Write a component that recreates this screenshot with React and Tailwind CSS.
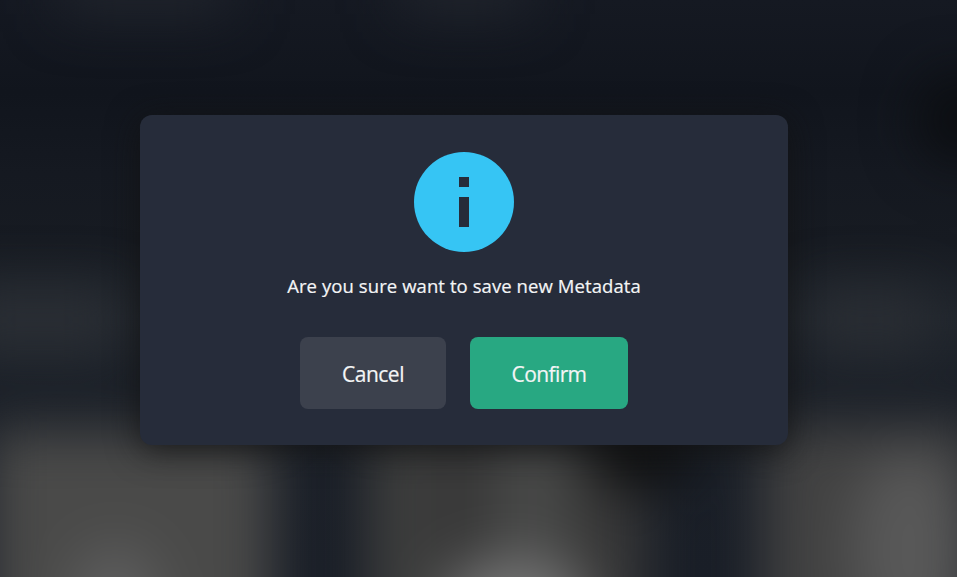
// Soft, out-of-focus page content that shows behind the dialog.
function Backdrop() {
  return (
    <svg
      className="absolute inset-0 h-full w-full"
      viewBox="0 0 957 577"
      preserveAspectRatio="none"
      aria-hidden="true"
    >
      <defs>
        <filter id="soft" x="-200" y="-200" width="1357" height="977" filterUnits="userSpaceOnUse" colorInterpolationFilters="sRGB">
          <feGaussianBlur stdDeviation="27" />
        </filter>
        <linearGradient id="page" x1="0" y1="0" x2="0" y2="1">
          <stop offset="0" stopColor="#151922" />
          <stop offset="0.16" stopColor="#11151d" />
          <stop offset="0.3" stopColor="#151921" />
          <stop offset="0.42" stopColor="#171b22" />
          <stop offset="0.55" stopColor="#20252c" />
          <stop offset="0.67" stopColor="#1b2028" />
          <stop offset="1" stopColor="#191e27" />
        </linearGradient>
      </defs>
      <rect width="957" height="577" fill="url(#page)" />
      <g filter="url(#soft)">
        <rect x="60" y="-50" width="170" height="64" fill="#20242c" />
        <rect x="400" y="-50" width="130" height="64" fill="#20242c" />
        <rect x="-40" y="290" width="160" height="60" fill="#2b2f35" />
        <rect x="810" y="290" width="120" height="60" fill="#2a2e34" />
        <ellipse cx="960" cy="120" rx="42" ry="45" fill="#0b0d10" />
        <rect x="-12" y="430" width="284" height="240" fill="#4a4a49" />
        <rect x="366" y="425" width="280" height="245" fill="#383838" />
        <rect x="380" y="435" width="40" height="200" fill="#404140" />
        <rect x="495" y="430" width="75" height="230" fill="#484948" />
        <ellipse cx="640" cy="450" rx="52" ry="42" fill="#101112" />
        <rect x="762" y="425" width="218" height="245" fill="#424242" />
        <ellipse cx="910" cy="550" rx="60" ry="100" fill="#585858" />
        <ellipse cx="115" cy="605" rx="45" ry="60" fill="#5e5e5e" />
        <ellipse cx="515" cy="605" rx="75" ry="48" fill="#737373" />
      </g>
    </svg>
  );
}

function InfoIcon() {
  return (
    <svg className="size-[100px]" viewBox="0 0 100 100" aria-hidden="true">
      <circle cx="50" cy="50" r="50" fill="#36c5f4" />
      <path d="M45 25h10v10H45zM45 45h10v30H45z" fill="#262c3a" />
    </svg>
  );
}

export default function App() {
  return (
    <main className="relative h-[577px] w-[957px] overflow-hidden bg-[#151923] pt-[115px] pl-[140px] font-['Open_Sans','Noto_Sans',sans-serif] text-[#f4f5f6]">
      <Backdrop />
      <section
        role="dialog"
        className="relative flex h-[330px] w-[648px] flex-col items-center rounded-xl bg-[#262c3a] pt-[37px] shadow-[0_5px_32px_rgba(17,17,17,0.8)]"
      >
        <InfoIcon />
        <p className="mt-5 text-[18.5px] leading-7 tracking-[0.08px] whitespace-nowrap [-webkit-text-stroke:0.2px_#f4f5f6]">
          Are you sure want to save new Metadata
        </p>
        <div className="mt-[37px] flex gap-6">
          <button className="h-[72px] w-[146px] rounded-lg bg-[#3c414d] pt-[3px] text-[21px] tracking-[-0.5px] [-webkit-text-stroke:0.2px_#f4f5f6]">
            Cancel
          </button>
          <button className="h-[72px] w-[158px] rounded-lg bg-[#28a882] pt-[3px] text-[21px] tracking-[-0.6px] [-webkit-text-stroke:0.2px_#f4f5f6]">
            Confirm
          </button>
        </div>
      </section>
    </main>
  );
}
